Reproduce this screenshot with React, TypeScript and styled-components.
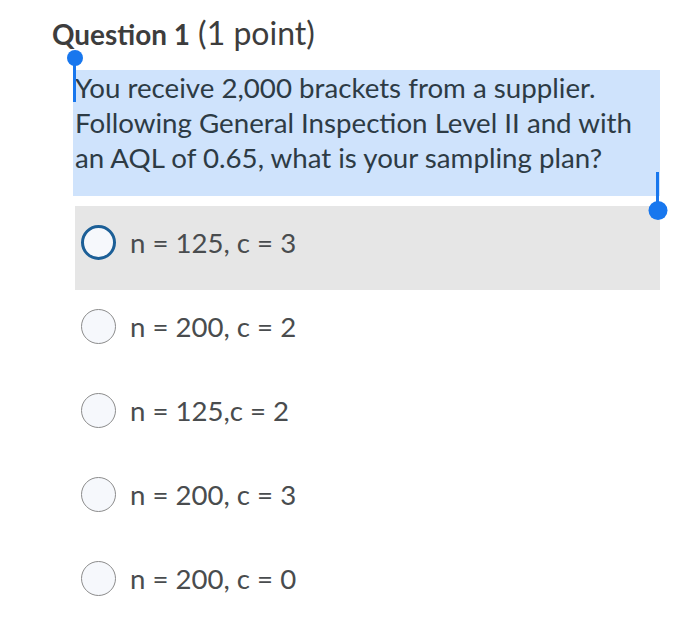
import React from "react";
import styled, { createGlobalStyle } from "styled-components";

const GlobalStyle = createGlobalStyle`
  html, body {
    margin: 0;
    padding: 0;
    background: #ffffff;
  }
  body {
    font-family: Lato, "Open Sans", "Liberation Sans", sans-serif;
  }
`;

const Page = styled.div`
  width: 700px;
  height: 622px;
  padding: 14px 0 0 52px;
  box-sizing: border-box;
  overflow: hidden;
`;

const Title = styled.h2`
  margin: 0;
  font-size: 32px;
  line-height: 38px;
  font-weight: 400;
  color: #3d3d3d;

  strong {
    font-size: 27.9px;
    font-weight: 700;
  }
`;

const Selection = styled.div`
  position: relative;
  margin: 19px 0 0 21px;
  width: 587px;
  height: 126px;
  background: #cfe3fc;
  padding: 0 0 0 2px;
  box-sizing: border-box;
`;

const Prompt = styled.p`
  margin: -2px 0 0;
  font-size: 27.7px;
  line-height: 35px;
  color: #2d3b45;
`;

const Handle = styled.span<{ $side: "start" | "end" }>`
  position: absolute;
  width: 3px;
  background: #1877ee;
  ${(p) =>
    p.$side === "start"
      ? `left: 0; top: -6px; height: 38px;`
      : `right: 1px; top: 102px; height: 34px;`}

  &::after {
    content: "";
    position: absolute;
    left: 50%;
    width: ${(p) => (p.$side === "start" ? 16 : 19)}px;
    height: ${(p) => (p.$side === "start" ? 16 : 19)}px;
    border-radius: 50%;
    background: #1877ee;
    transform: translateX(-50%);
    ${(p) => (p.$side === "start" ? `top: -14px;` : `bottom: -14px;`)}
  }
`;

const Options = styled.ul`
  list-style: none;
  margin: 10px 0 0 23px;
  padding: 0;
  width: 585px;
`;

const Option = styled.li<{ $active?: boolean }>`
  display: flex;
  align-items: center;
  gap: 14px;
  height: 84px;
  padding: 0 0 12px 6px;
  box-sizing: border-box;
  background: ${(p) => (p.$active ? "#e6e6e6" : "transparent")};
`;

const Radio = styled.span<{ $active?: boolean }>`
  flex: none;
  width: 35px;
  height: 35px;
  border-radius: 50%;
  box-sizing: border-box;
  background: #f6f8fc;
  border: ${(p) => (p.$active ? "3px solid #1c5f97" : "1.5px solid #8c8c8c")};
`;

const Label = styled.span`
  font-size: 27.6px;
  color: #494c4e;
`;

const choices = [
  "n = 125, c = 3",
  "n = 200, c = 2",
  "n = 125,c = 2",
  "n = 200, c = 3",
  "n = 200, c = 0",
];

export default function App() {
  return (
    <>
      <GlobalStyle />
      <Page>
        <Title>
          <strong>Question 1</strong> (1 point)
        </Title>
        <Selection>
          <Handle $side="start" />
          <Prompt>
            You receive 2,000 brackets from a supplier.
            <br />
            Following General Inspection Level II and with
            <br />
            an AQL of 0.65, what is your sampling plan?
          </Prompt>
          <Handle $side="end" />
        </Selection>
        <Options>
          {choices.map((c, i) => (
            <Option key={c} $active={i === 0}>
              <Radio $active={i === 0} />
              <Label>{c}</Label>
            </Option>
          ))}
        </Options>
      </Page>
    </>
  );
}
